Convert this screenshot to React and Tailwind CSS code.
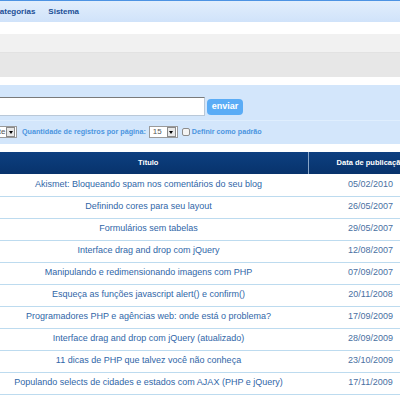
import React from 'react'

const rows = [
  ['Akismet: Bloqueando spam nos comentários do seu blog', '05/02/2010'],
  ['Definindo cores para seu layout', '26/05/2007'],
  ['Formulários sem tabelas', '29/05/2007'],
  ['Interface drag and drop com jQuery', '12/08/2007'],
  ['Manipulando e redimensionando imagens com PHP', '07/09/2007'],
  ['Esqueça as funções javascript alert() e confirm()', '20/11/2008'],
  ['Programadores PHP e agências web: onde está o problema?', '17/09/2009'],
  ['Interface drag and drop com jQuery (atualizado)', '28/09/2009'],
  ['11 dicas de PHP que talvez você não conheça', '23/10/2009'],
  ['Populando selects de cidades e estados com AJAX (PHP e jQuery)', '17/11/2009'],
]

function FakeSelect({ value, className }) {
  return (
    <div className={`flex items-center h-[12px] bg-white border border-[#9a9a9a] overflow-hidden ${className}`}>
      <span className="flex-1 pl-[3px] text-[8px] font-normal leading-none text-[#555] whitespace-nowrap">{value}</span>
      <span className="shrink-0 w-[9px] h-[10px] mr-[1px] flex items-center justify-center bg-[#e8e8e8] border border-[#8a8a8a]">
        <span className="w-0 h-0 border-l-[2.5px] border-r-[2.5px] border-t-[3px] border-l-transparent border-r-transparent border-t-black" />
      </span>
    </div>
  )
}

export default function App() {
  return (
    <div className="w-[400px] h-[400px] overflow-hidden bg-white font-['Liberation_Sans',Arial,sans-serif]">
      {/* menu */}
      <div className="h-[22px] border-t border-[#4d93e3] bg-gradient-to-b from-[#e2eefc] to-[#d0e3fa] flex items-center gap-[13px] -ml-[6px] text-[8px] font-bold text-[#1c4f96]">
        <span>Categorias</span>
        <span>Sistema</span>
      </div>
      <div className="h-[12px] bg-white" />
      <div className="h-[19px] bg-[#f1f1f1] border-b border-[#e2e2e2]" />
      <div className="h-[24px] bg-[#e7e7e7]" />
      <div className="h-[8px] bg-white" />

      {/* busca */}
      <div className="h-[59px] bg-[#d3e6fb] pt-[12px]">
        <div className="flex items-center">
          <div className="-ml-[40px] w-[245px] h-[19px] bg-white border border-[#b9c8d8] border-t-[#7a7a7a] border-l-[#7a7a7a]" />
          <button className="ml-[2px] w-[36px] h-[16px] rounded-[4px] bg-[#5aacf6] text-white text-[9px] font-bold leading-none">
            enviar
          </button>
        </div>
        <div className="mt-[4px] border-t border-[#dfeefd] pt-[5px] flex items-center text-[7.2px] font-bold text-[#4b95e0]">
          <FakeSelect value="Crescente" className="-ml-[35px] w-[52px]" />
          <span className="ml-[5px]">Quantidade de registros por página:</span>
          <FakeSelect value="15" className="ml-[3px] w-[29px]" />
          <span className="ml-[4px] w-[8px] h-[8px] rounded-[2px] border border-[#8c8c8c] bg-[#f4f4f4]" />
          <span className="ml-[2px]">Definir como padrão</span>
        </div>
      </div>
      <div className="h-[8px] bg-white" />

      {/* tabela */}
      <table className="-ml-[11px] w-[444px] border-collapse text-[9px]">
        <thead>
          <tr className="h-[22px] bg-gradient-to-b from-[#0d3f80] to-[#08336c] text-white text-[7.5px]">
            <th className="w-[319px] font-bold border-r border-[#8aa6c8]">Título</th>
            <th className="font-bold whitespace-nowrap">Data de publicação</th>
          </tr>
        </thead>
        <tbody>
          {rows.map(([t, d]) => (
            <tr key={t} className="h-[22px] border-b border-[#bddbef] text-[#3066a8]">
              <td className="text-center">{t}</td>
              <td className="text-center text-[#4a70a2]">{d}</td>
            </tr>
          ))}
        </tbody>
      </table>
    </div>
  )
}
